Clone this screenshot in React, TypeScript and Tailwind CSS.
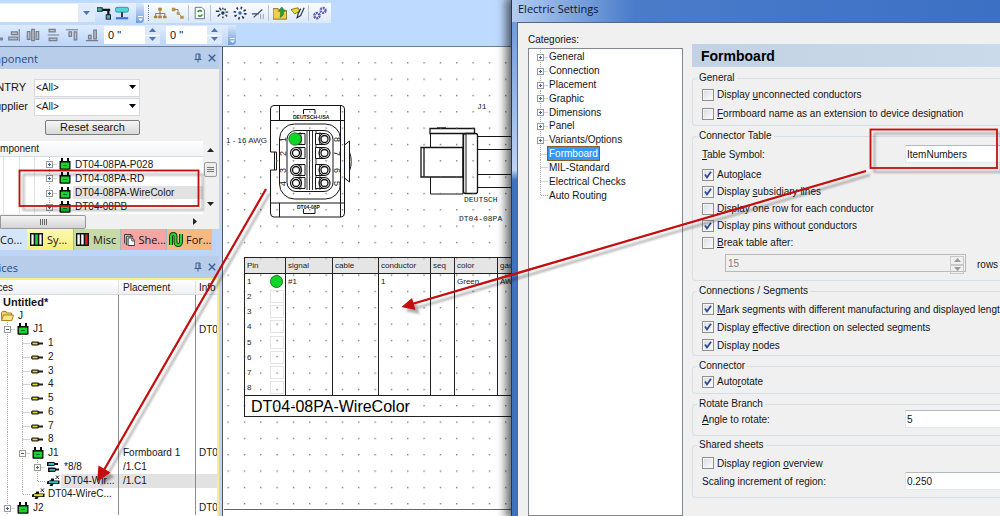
import type { ReactNode } from "react";

const INK = "#151515";

/* ---------- small drawings ---------- */

function Seg({ kind, box }: { kind: "pass" | "tee" | "end" | "none"; box?: "plus" | "minus" }) {
  return (
    <svg width="15" height="14" viewBox="0 0 15 14" className="block shrink-0" aria-hidden="true">
      {kind !== "none" && (
        <path
          d={kind === "end" ? "M7.5 0V7.5H15" : kind === "tee" ? "M7.5 0V14M7.5 7.5H15" : "M7.5 0V14"}
          stroke="#a9a9a9"
          strokeDasharray="1 1"
          fill="none"
        />
      )}
      {box && (
        <>
          <rect x="4.5" y="4.5" width="6" height="6" fill="#fdfdfd" stroke="#9a9a9a" />
          <path d={box === "plus" ? "M6 7.5H9M7.5 6V9" : "M6 7.5H9"} stroke="#3b5ea8" />
        </>
      )}
    </svg>
  );
}

function Plug() {
  return (
    <svg width="12" height="12" viewBox="0 0 12 12" className="block shrink-0" aria-hidden="true">
      <path d="M2 0H4V3H8V0H10V3H11.5V11Q11.5 11.8 10.5 11.8H1.5Q.5 11.8 .5 11V3H2Z" fill="#0a0a0a" />
      <rect x="1.8" y="4.600" width="8.4" height="5.800" rx="1" fill="#16d52c" />
      <path d="M4 7.5H8" stroke="#063" />
    </svg>
  );
}

function Pin() {
  return (
    <svg width="12" height="12" viewBox="0 0 12 12" className="block shrink-0" aria-hidden="true">
      <path d="M1 4.5H7L8.5 5.5H12V7.5H8.5L7 8.5H1L0 7V6Z" fill="#222" />
      <path d="M1.5 6.5H6.5" stroke="#e6dc1e" strokeWidth="1.6" />
    </svg>
  );
}

function Wires() {
  return (
    <svg width="13" height="12" viewBox="0 0 13 12" className="block shrink-0" aria-hidden="true">
      <path d="M0 1H7L8 2H11V4H8L7 5H0Z M1 6.500H8L9 7.500H12V9.500H9L8 11H1Z" fill="#111" />
      <path d="M1.500 3H7M2.500 8.800H8" stroke="#22c4cc" strokeWidth="1.800" />
    </svg>
  );
}

function Tagged({ tone }: { tone: string }) {
  return (
    <svg width="13" height="12" viewBox="0 0 13 12" className="block shrink-0" aria-hidden="true">
      <path d="M0 6.5L4 5V3.5H7V5.5H12.5V9H6.5L5.5 11H2.5L3.5 9H0Z" fill="#111" />
      <path d="M2 7.200H11" stroke={tone} strokeWidth="2" />
      <path d="M8.5 4L12 .5M9 .5L12 4" stroke="#222" />
    </svg>
  );
}

function Folder() {
  return (
    <svg width="13" height="12" viewBox="0 0 13 12" className="block shrink-0" aria-hidden="true">
      <path d="M.5 10V2.5L1.5 1.5H5L6 3H10.5V5" fill="#f1cf5b" stroke="#a98520" />
      <path d="M.5 10.5L2.5 5H12.5L10.8 10.5Z" fill="#fce58e" stroke="#a98520" />
    </svg>
  );
}

function PushPin() {
  return (
    <svg width="8" height="10" viewBox="0 0 8 10" aria-hidden="true">
      <path d="M2 6V1H6V6M5 1V6M.5 6.5H7.5M4 6.5V9.5" stroke="#3c5f93" fill="none" />
    </svg>
  );
}

function Cross() {
  return (
    <svg width="8" height="8" viewBox="0 0 8 8" aria-hidden="true">
      <path d="M.8 .8L7.2 7.2M7.2 .8L.8 7.2" stroke="#3c5f93" strokeWidth="1.4" />
    </svg>
  );
}

function Tri({ d, fill = "#222" }: { d: "up" | "down" | "right"; fill?: string }) {
  const p = { up: "M0 5L3.5 1L7 5Z", down: "M0 1L3.5 5L7 1Z", right: "M1 0L5 3.5L1 7Z" }[d];
  return (
    <svg width="7" height="7" viewBox="0 0 7 7" className="block shrink-0" aria-hidden="true">
      <path d={p} fill={fill} />
    </svg>
  );
}

/* ---------- toolbars ---------- */

function Tool({ label, children }: { label: string; children: ReactNode }) {
  return (
    <button type="button" aria-label={label} className="flex h-[18px] w-[18px] shrink-0 items-center justify-center">
      <svg width="14" height="14" viewBox="0 0 16 16" fill="none" aria-hidden="true">
        {children}
      </svg>
    </button>
  );
}

const Sep = () => <span className="mx-px h-4 w-[2px] shrink-0 border-l border-[#b8c4d4]" />;

function Overflow() {
  return (
    <button type="button" aria-label="Toolbar options" className="flex h-full w-2 shrink-0 items-end justify-center rounded-r bg-linear-to-b from-[#dcebfd] to-[#6f9bd6] pb-px">
      <svg width="7" height="7" viewBox="0 0 7 7" aria-hidden="true">
        <path d="M1 1.5H6" stroke="#fff" />
        <path d="M1 3.5H6L3.5 6Z" fill="#fff" />
      </svg>
    </button>
  );
}

function AngleBox({ label }: { label: string }) {
  return (
    <div className="flex h-[18px] w-14 shrink-0 bg-white">
      <input aria-label={label} defaultValue={'0 "'} className="w-0 flex-1 bg-transparent pl-1 text-[11px] text-[#151515] outline-none" />
      <div className="flex w-[15px] flex-col gap-px">
        <button type="button" aria-label={label + " up"} className="flex flex-1 items-center justify-center bg-[#dde9f8]"><Tri d="up" fill="#4b77b8" /></button>
        <button type="button" aria-label={label + " down"} className="flex flex-1 items-center justify-center bg-[#dde9f8]"><Tri d="down" fill="#4b77b8" /></button>
      </div>
    </div>
  );
}

function Toolbars() {
  return (
    <header className="flex h-[47px] shrink-0 flex-col gap-[2px] overflow-hidden border-b border-[#6f7f96] bg-[#bfdaff] pt-[3px]">
      <div className="flex h-5 shrink-0">
        <div className="flex h-full w-36 shrink-0 items-center bg-linear-to-b from-[#e9f2fe] to-[#c3dafa]">
          <div className="flex h-[18px] w-[95px] items-center bg-white">
            <input aria-label="Name" className="h-full w-0 flex-1 outline-none" />
            <button type="button" aria-label="Open list" className="flex h-full w-[17px] items-center justify-center bg-[#dfebfb]">
              <Tri d="down" fill="#4b77b8" />
            </button>
          </div>
          <Tool label="Connection">
            <rect x="0" y="2" width="6" height="4" fill="#39b9b2" stroke="#111" />
            <rect x="10.500" y="10" width="5" height="5" fill="#39b9b2" stroke="#111" />
            <path d="M6 4.500H15M13 4V10" stroke="#111" strokeWidth="2.500" />
          </Tool>
          <Tool label="Route">
            <rect x=".5" y="1.500" width="15" height="5.500" rx="2" fill="#53d3dc" stroke="#2b8f98" />
            <path d="M8 7V13" stroke="#222" strokeWidth="2" />
            <path d="M1 14H15" stroke="#3f6fe0" strokeWidth="2.500" />
          </Tool>
          <span className="flex-1" />
          <Overflow />
        </div>
        <div className="flex h-full w-[187px] shrink-0 items-center bg-linear-to-b from-[#fbfdff] to-[#dbe8f9] pl-1">
          <span className="mr-[2px] h-4 w-px border-l border-dotted border-[#5d83bb]" />
          <Tool label="Hierarchy">
            <path d="M8 4V8M3 12V8.500H13.500V12M8 8V12" stroke="#7a6a3a" />
            <path d="M6 2H10V5.500H6ZM1 11H5V14H1ZM6 11H10V14H6ZM11.500 11H15.500V14H11.500Z" fill="#a98235" />
          </Tool>
          <Tool label="Chain">
            <path d="M4 4H8V8L12 12" stroke="#777" />
            <path d="M1 2H5V6H1ZM6.500 7H10V10H6.500ZM10.500 11H14.500V14.500H10.500Z" fill="#b99142" />
          </Tool>
          <Sep />
          <Tool label="Refresh sheet">
            <path d="M2.500 1.500H10L13 4.500V14.500H2.500Z" fill="#fff" stroke="#52637d" />
            <path d="M5.500 7A2.500 2.500 0 0 1 10 6.500M10.500 9.500A2.500 2.500 0 0 1 6 10.500" stroke="#3f9a36" strokeWidth="2" />
          </Tool>
          <Sep />
          <Tool label="Converge">
            <path d="M1 6H5M5 2L7 5M3 12L6 9M9 2V4M12 3L11 5M15 7H12M14 12L12 10M9 12V14" stroke="#27364f" strokeWidth="1.600" />
            <circle cx="9" cy="8" r="2" fill="#27364f" />
          </Tool>
          <Tool label="Spread">
            <circle cx="8" cy="8" r="6" stroke="#27364f" strokeWidth="3" strokeDasharray="1.800 2.900" />
            <circle cx="8" cy="8" r="2" fill="#3867a8" />
          </Tool>
          <Tool label="Trim">
            <path d="M1 9H9M3 13L13 4" stroke="#3c4c66" strokeWidth="1.300" />
            <path d="M11 9V15M14 9V15" stroke="#8a97aa" />
          </Tool>
          <Sep />
          <Tool label="Open folder">
            <path d="M0 3H6L7.500 5H15.500V15H0Z" fill="#f0cf4c" stroke="#80681c" />
            <path d="M8 13C12 11.500 13 8.500 11.500 6H14L10 1L6 6H8.500C9 9 8.500 11 8 13" fill="#2e9b36" stroke="#1b6422" strokeWidth=".6" />
          </Tool>
          <Tool label="Mark">
            <path d="M0 4L8 2L10 6L4 9Z" fill="#eae023" stroke="#77710f" />
            <path d="M15 2L11 11L7 13.500L8 9L11 3" stroke="#27364f" strokeWidth="1.400" />
          </Tool>
          <Sep />
          <Tool label="Settings">
            <circle cx="4.500" cy="11" r="3" stroke="#5a57b5" strokeWidth="2.800" strokeDasharray="2.300 .8" />
            <circle cx="11.500" cy="5" r="2.800" stroke="#6a66c0" strokeWidth="2.800" strokeDasharray="2.300 .8" />
          </Tool>
        </div>
      </div>
      <div className="flex h-5 shrink-0 items-center">
        <div className="flex h-full w-[236px] items-center bg-linear-to-b from-[#dfecfe] to-[#bcd5f8]">
          <div className="flex w-[104px] shrink-0 items-center justify-between pr-[3px]">
            <svg width="3" height="16" viewBox="0 0 3 16" aria-hidden="true"><path d="M0 12H3" stroke="#7f8794" strokeWidth="3" /></svg>
            <Tool label="Align right"><path d="M14 1V15M5 4.500H12V7.500H5ZM2 10.500H12V13.500H2Z" fill="#b9bec7" stroke="#777e8a" strokeWidth="1.300" /></Tool>
            <Tool label="Distribute across"><path d="M1.500 4H4.500V13H1.500ZM6.500 1.500H9.500V14.500H6.500ZM11.500 4H14.500V13H11.500Z" fill="#b9bec7" stroke="#777e8a" strokeWidth="1.300" /></Tool>
            <Tool label="Distribute down"><path d="M3.500 1.500H10.500V4.500H3.500ZM2 8H15M3.500 11.500H12.500V14.500H3.500Z" fill="#b9bec7" stroke="#777e8a" strokeWidth="1.300" /></Tool>
            <Tool label="Align top"><path d="M1 2H15M4.500 4.500H7.500V9.500H4.500ZM10.500 4.500H13.500V13.500H10.500Z" fill="#b9bec7" stroke="#777e8a" strokeWidth="1.300" /></Tool>
            <Tool label="Align bottom"><path d="M1 14.500H15M4 8.500H7V12.500H4ZM10 2.500H13V12.500H10Z" fill="#b9bec7" stroke="#777e8a" strokeWidth="1.300" /></Tool>
          </div>
          <AngleBox label="Angle A" />
          <span className="w-[6px]" />
          <AngleBox label="Angle B" />
          <span className="flex-1" />
          <Overflow />
        </div>
      </div>
    </header>
  );
}

/* ---------- left docked panels ---------- */

function PanelHead({ title, edge }: { title: string; edge: string }) {
  return (
    <div className="flex h-[22px] shrink-0 items-center bg-[#b7cde9] pr-[3px] font-['Open_Sans',sans-serif] text-[11px] text-[#1f4a8c]">
      <h2 className={"flex shrink-0 justify-end " + edge}>{title}</h2>
      <span className="flex-1" />
      <button type="button" aria-label={"Pin " + title} className="mr-[6px]"><PushPin /></button>
      <button type="button" aria-label={"Close " + title}><Cross /></button>
    </div>
  );
}

function Filter({ label, id, edge }: { label: string; id: string; edge: string }) {
  return (
    <div className="flex h-[19px] items-center">
      <div className="flex w-[34px] shrink-0">
        <label htmlFor={id} className={"flex justify-end text-[11px] " + edge}>{label}</label>
      </div>
      <div className="grid w-[106px] items-center">
        <select id={id} className="col-start-1 row-start-1 h-[18px] appearance-none border border-[#d5d9df] bg-white pl-px text-[10px] leading-none">
          <option>&lt;All&gt;</option>
        </select>
        <span className="pointer-events-none col-start-1 row-start-1 mr-1 justify-self-end"><Tri d="down" fill="#000" /></span>
      </div>
    </div>
  );
}

const PARTS = ["DT04-08PA-P028", "DT04-08PA-RD", "DT04-08PA-WireColor", "DT04-08PB"];

function ComponentPanel() {
  return (
    <section className="flex h-[203px] shrink-0 flex-col overflow-hidden bg-[#f0f0f0]">
      <PanelHead title="Component" edge="w-[38px]" />
      <div className="flex h-[72px] shrink-0 flex-col pt-[9px]">
        <Filter label="COUNTRY" id="country" edge="w-[26px]" />
        <Filter label="Supplier" id="supplier" edge="w-[28px]" />
        <button type="button" className="mt-[4px] ml-[45px] h-[15px] w-[95px] rounded-xs border border-[#7c7c7c] bg-linear-to-b from-[#f6f6f6] to-[#d9d9d9] text-[11px] leading-[13px]">Reset search</button>
      </div>
      <div className="flex h-[73px] shrink-0">
        <div className="flex w-[203px] shrink-0 flex-col bg-white">
          <div className="flex h-4 shrink-0 items-center border-b border-[#d8dce2] bg-linear-to-b from-white to-[#f1f2f4]">
            <span className="flex w-[39px] justify-end">Component</span>
          </div>
          <ul className="flex min-h-0 flex-1 flex-col">
            {PARTS.map((p) => (
              <li key={p} className="flex min-h-0 flex-1 items-center leading-[13px]">
                <span className="ml-[3px] h-full w-[16px] border-l border-[#e2e2e2]" />
                <span className="h-full w-[15px] border-l border-[#e2e2e2]" />
                <span className="h-full w-[8px] border-l border-[#e2e2e2]" />
                <Seg kind="tee" box="plus" />
                <span className="mx-[2px]"><Plug /></span>
                <span className={p === "DT04-08PA-WireColor" ? "flex-1 bg-[#e2e2e2] pl-[2px]" : "flex-1 pl-[2px]"}>{p}</span>
              </li>
            ))}
          </ul>
        </div>
        <div className="flex w-[14px] flex-col items-center bg-[#f0f0f0] py-[6px]">
          <Tri d="up" />
          <div className="mt-[8px] flex h-[15px] w-[13px] flex-col items-center justify-center gap-px rounded-xs border border-[#989898] bg-[#ececec]">
            <span className="h-px w-[7px] bg-[#777]" />
            <span className="h-px w-[7px] bg-[#777]" />
            <span className="h-px w-[7px] bg-[#777]" />
          </div>
          <span className="flex-1" />
          <Tri d="down" />
        </div>
      </div>
      <div className="flex h-[15px] shrink-0 items-center bg-[#f0f0f0]">
        <div className="flex h-[14px] w-[86px] items-center justify-center gap-px rounded-r-xs border border-[#989898] bg-linear-to-b from-[#f4f4f4] to-[#d4d4d4]">
          <span className="h-[6px] w-px bg-[#666]" />
          <span className="h-[6px] w-px bg-[#666]" />
          <span className="h-[6px] w-px bg-[#666]" />
          <span className="h-[6px] w-px bg-[#666]" />
        </div>
        <span className="ml-[106px]"><Tri d="right" /></span>
      </div>
      <nav className="flex flex-1 bg-[#bcd5f6] font-['Open_Sans',sans-serif] text-[11px]">
        <button type="button" className="w-[27px] bg-[#d5e6fb] text-left">Co...</button>
        <button type="button" className="flex w-[46px] items-center gap-[4px] bg-linear-to-b from-[#fdf9b0] to-[#f8ee78] pl-[3px]">
          <svg width="13" height="13" viewBox="0 0 13 13" aria-hidden="true"><path d="M.7 .7H4.500V12.300H.7ZM8.500 .7H12.300V12.300H8.500Z" fill="#fff" stroke="#111" strokeWidth="1.400" /><rect x="4.500" y=".7" width="4" height="11.600" fill="#1bd431" stroke="#111" strokeWidth="1.400" /></svg>
          Sy...
        </button>
        <button type="button" className="flex w-[47px] items-center gap-[4px] border-l border-[#a5b6c4] bg-[#c6d9a6] pl-[2px]">
          <svg width="13" height="13" viewBox="0 0 13 13" aria-hidden="true"><path d="M.7 .7H4.500V12.300H.7ZM4.500 .7H8.500V12.300H4.500Z" fill="#fff" stroke="#111" strokeWidth="1.400" /><rect x="8.500" y=".7" width="3.800" height="11.600" fill="#e02020" stroke="#111" strokeWidth="1.400" /></svg>
          Misc
        </button>
        <button type="button" className="flex w-[46px] items-center gap-[3px] border-l border-[#a5b6c4] bg-[#f4a5a4] pl-[3px]">
          <svg width="13" height="14" viewBox="0 0 13 14" aria-hidden="true"><path d="M.7 11V.7H8V3M2.700 13V2.700H10V4" fill="#ddd" stroke="#222" /><path d="M4.700 13.300V4.700H9.500L12.300 7.500V13.300Z" fill="#fff" stroke="#222" /><path d="M9 5V8H12" stroke="#222" fill="none" /></svg>
          She...
        </button>
        <button type="button" className="flex w-[46px] items-center gap-px border-l border-[#a5b6c4] bg-[#f8b980] pl-[2px]">
          <svg width="16" height="15" viewBox="0 0 16 15" aria-hidden="true"><path d="M2 13V5C2 1 6.500 1 6.500 5V10C6.500 14 12 14 12 10V2" fill="none" stroke="#173a10" strokeWidth="4" /><path d="M2 13V5C2 1 6.500 1 6.500 5V10C6.500 14 12 14 12 10V2" fill="none" stroke="#2bd23a" strokeWidth="2" /></svg>
          For...
        </button>
      </nav>
    </section>
  );
}

type Row = { name: string; lead: ReactNode; place?: string; info?: string; on?: boolean; bold?: boolean };

const pass = <Seg kind="pass" />;
const pinLead = (<>{pass}<Seg kind="tee" /><span className="mr-[5px] ml-px"><Pin /></span></>);

const ROWS: Row[] = [
  { name: "Untitled*", lead: <span className="w-[3px]" />, bold: true },
  { name: "J", lead: <span className="mr-[4px] ml-px"><Folder /></span> },
  { name: "J1", lead: <><Seg kind="tee" box="minus" /><span className="mr-[4px] ml-[2px]"><Plug /></span></>, info: "DT0" },
  ...["1", "2", "3", "4", "5", "6", "7", "8"].map((name) => ({ name, lead: pinLead })),
  { name: "J1", lead: <>{pass}<Seg kind="tee" box="minus" /><span className="mr-[4px] ml-[2px]"><Plug /></span></>, place: "Formboard 1", info: "DT0" },
  { name: "*8/8", lead: <>{pass}{pass}<Seg kind="tee" box="plus" /><span className="mr-[4px] ml-[2px]"><Wires /></span></>, place: "/1.C1" },
  { name: "DT04-Wir...", lead: <>{pass}{pass}<Seg kind="end" /><span className="mr-px ml-[2px]"><Tagged tone="#22c4cc" /></span></>, place: "/1.C1", on: true },
  { name: "DT04-WireC...", lead: <>{pass}<Seg kind="end" /><span className="mr-[3px] ml-[2px]"><Tagged tone="#e6dc1e" /></span></> },
  { name: "J2", lead: <><Seg kind="tee" box="plus" /><span className="mr-[4px] ml-[2px]"><Plug /></span></>, info: "DT0" },
];

function DevicesPanel() {
  return (
    <section className="flex flex-1 flex-col overflow-hidden">
      <PanelHead title="Devices" edge="w-[18px]" />
      <div className="flex-1 border-t-2 border-r-2 border-[#f4ef8c] bg-white">
        <div className="flex h-[15px] items-center border-b border-[#d8dce2] bg-linear-to-b from-white to-[#eff0f2]">
          <span className="flex w-[118px] shrink-0"><span className="flex w-[13px] justify-end">Devices</span></span>
          <span className="w-[77px] shrink-0 border-l border-[#dcdfe4] pl-[4px]">Placement</span>
          <span className="w-[22px] shrink-0 border-l border-[#dcdfe4] pl-[3px]">Info</span>
        </div>
        <ul className="flex h-[220px] flex-col">
          {ROWS.map((r, i) => (
            <li key={i} className="flex min-h-0 flex-1 items-stretch leading-[14px] whitespace-nowrap">
              <span className="flex w-[118px] shrink-0 items-center">
                {r.lead}
                <span className={(r.on ? "flex-1 bg-[#e2e2e2] pl-[3px] " : "") + (r.bold ? "text-[11px] font-bold" : "")}>{r.name}</span>
              </span>
              <span className={"w-[77px] shrink-0 border-l border-[#8c8c8c] pl-[4px] " + (r.on ? "bg-[#e2e2e2]" : "")}>{r.place}</span>
              <span className={"w-[22px] shrink-0 overflow-hidden border-l border-[#8c8c8c] pl-[3px] " + (r.on ? "bg-[#e2e2e2]" : "")}>{r.info}</span>
            </li>
          ))}
        </ul>
      </div>
    </section>
  );
}

/* ---------- drawing area ---------- */

function Cavity({ x, y, flip }: { x: number; y: number; flip?: boolean }) {
  const s = flip ? -1 : 1;
  return (
    <g stroke={INK} fill="none">
      <path d={`M${x + s * 9} ${y - 5.500}H${x}A5.500 5.500 0 0 0 ${x} ${y + 5.500}H${x + s * 9}Z`} fill="#fff" stroke="none" />
      <circle cx={x} cy={y} r="5.500" strokeWidth="1.200" />
      <circle cx={x} cy={y} r="3.500" strokeWidth="1.300" />
      <path d={`M${x} ${y - 5.500}H${x + s * 9}V${y + 5.500}H${x}`} />
      <path d={`M${x + s * 5} ${y - 5.500}V${y + 5.500}`} strokeWidth=".7" />
    </g>
  );
}

function Drawing() {
  const ys = [139, 153, 170, 183];
  return (
    <svg width="288" height="469" viewBox="223 47 288 469" className="block" role="img" aria-label="Connector views">
      <defs>
        <pattern id="dots" x="227.500" y="62.200" width="16.330" height="16.330" patternUnits="userSpaceOnUse">
          <rect width="1.300" height="1.300" fill="#6a6a6a" />
        </pattern>
      </defs>
      <g stroke={INK} fill="none">
        <path d="M274 105.500H341Q344.500 105.500 344.500 109V213Q344.500 217 341 217H274Q270.500 217 270.500 213V170H276.500V152H270.500V109Q270.500 105.500 274 105.500Z" />
        <path d="M270.500 120.500H345M270.500 203H345M279.500 105V120.500M340.500 105V217M279.500 203V217M274.500 152V170" />
        <path d="M344.500 145L349.500 141V182L344.500 178M349.500 152Q353 161.500 349.500 171" />
        <rect x="279.500" y="124" width="61" height="75" rx="15" />
        <rect x="287" y="130.500" width="46" height="61" rx="9" />
        <path d="M307 131V190M309.500 131V190M312.500 131V190M316 131V190" strokeWidth=".9" />
        <path d="M303.500 114V109.500H315V114M303.500 209V213.500H315V209" />
        <path d="M300 132V145M320 132V145M300 176V190M320 176V190" strokeWidth=".7" />
      </g>
      {ys.map((y) => (
        <g key={y}>
          <Cavity x={296} y={y} />
          <Cavity x={324.500} y={y} flip />
        </g>
      ))}
      <circle cx="295" cy="139" r="6.200" fill="#12d52a" stroke="#0c7a18" strokeWidth=".8" />
      <g fill={INK} fontFamily="Liberation Sans, sans-serif" fontSize="5" fontWeight="bold">
        <text x="293" y="119">DEUTSCH-USA</text>
        <text x="297" y="209">DT04-08P</text>
      </g>
      <g fill={INK} fontFamily="Liberation Sans, sans-serif" fontSize="9">
        {["1", "2", "3", "4"].map((t, i) => (
          <text key={t} transform={`translate(286 ${ys[i] + 3}) rotate(-90)`}>{t}</text>
        ))}
        {["8", "7", "6", "5"].map((t, i) => (
          <text key={t} transform={`translate(334 ${ys[i] - 2}) rotate(90)`}>{t}</text>
        ))}
      </g>
      <text x="226" y="143" fontFamily="Liberation Sans, sans-serif" fontSize="8" fill="#26262e">1 - 16 AWG</text>
      <g stroke={INK} fill="none">
        <path d="M430 128.500H474.500V133.500H430ZM437 128H446" strokeWidth="1.300" />
        <path d="M430.500 134V147M430.500 177V194H463V134" />
        <path d="M421 147.500H463V177H421ZM424 148V177" strokeWidth="1.300" />
        <rect x="463.500" y="133.500" width="14" height="60" rx="2" strokeWidth="1.300" />
        <path d="M466 134V193M478 136.500H511M478 149.500H511M478 174.500H511M478 187.500H511" />
      </g>
      <g fill="#1a1a1a" fontFamily="Liberation Mono, monospace" fontSize="8">
        <text x="477" y="109">J1</text>
        <text x="464" y="202">DEUTSCH</text>
        <text x="459" y="221">DT04-08PA</text>
      </g>
      <rect x="224" y="48" width="287" height="468" fill="url(#dots)" />
      <path d="M224 509.500H511" stroke="#666" />
    </svg>
  );
}

const COLS: [string, string][] = [
  ["Pin", "w-[41px]"],
  ["signal", "w-[47px]"],
  ["cable", "w-[46px]"],
  ["conductor", "w-[52px]"],
  ["seq", "w-[24px]"],
  ["color", "w-[43px]"],
  ["gau", "w-[40px]"],
];
const FIRST = ["", "#1", "", "1", "", "Green", "AW"];

function PinTable() {
  return (
    <div className="absolute top-[210px] left-[21px] w-[293px] text-[#222]">
      <table className="h-[139px] w-full table-fixed border-collapse border border-[#222] text-left text-[8px] leading-[9px]">
        <thead>
          <tr className="h-4 border-b border-[#222] bg-[#d4d4d4]/60">
            {COLS.map(([t, w]) => (
              <th key={t} className={w + " border-l border-[#222] p-0 pl-[2px] font-normal"}>{t}</th>
            ))}
          </tr>
        </thead>
        <tbody>
          {["1", "2", "3", "4", "5", "6", "7", "8"].map((n, i) => (
            <tr key={n}>
              <td className="border-l border-[#222] p-0">
                <div className="flex items-center justify-between pl-[2px]">
                  {n}
                  {i === 0 ? (
                    <span className="mr-[2px] h-[13px] w-[13px] rounded-full border border-[#0c7a18] bg-[#12d52a]" />
                  ) : (
                    <span className="mr-px h-[13px] w-[14px] border border-[#e4e4e4]" />
                  )}
                </div>
              </td>
              {COLS.slice(1).map(([t], c) => (
                <td key={t} className="border-l border-[#222] p-0 pl-[2px]">{i === 0 ? FIRST[c + 1] : ""}</td>
              ))}
            </tr>
          ))}
        </tbody>
      </table>
      <p className="h-[21px] border border-t-0 border-[#222] pl-[6px] text-[16px] leading-[22px] text-black">DT04-08PA-WireColor</p>
    </div>
  );
}

/* ---------- dialog ---------- */

function Check({ id, on, size, children }: { id: string; on?: boolean; size: string; children: ReactNode }) {
  return (
    <div className={"flex shrink-0 items-center whitespace-nowrap " + size}>
      <span className="mr-[3px] grid shrink-0">
        <input id={id} type="checkbox" defaultChecked={on} className="peer col-start-1 row-start-1 h-3 w-3 appearance-none border border-[#8e8f8f] bg-linear-to-br from-[#d6dae0] to-white shadow-[inset_0_0_0_1px_#f4f4f4]" />
        <svg viewBox="0 0 12 12" className="pointer-events-none invisible col-start-1 row-start-1 h-3 w-3 peer-checked:visible" aria-hidden="true">
          <path d="M3 5.500L5 8.500L9 2.800" fill="none" stroke="#2d4a9a" strokeWidth="1.800" />
        </svg>
      </span>
      <label htmlFor={id}>{children}</label>
    </div>
  );
}

function Group({ title, className, children }: { title: string; className: string; children: ReactNode }) {
  return (
    <fieldset className={"min-w-0 shrink-0 rounded-l-sm border border-r-0 border-[#d5dfe5] pl-[9px] " + className}>
      <legend className="-ml-[5px] h-3 px-[2px] leading-3">{title}</legend>
      {children}
    </fieldset>
  );
}

function Field({ id, label, value }: { id: string; label: ReactNode; value: string }) {
  return (
    <div className="flex h-[18px] shrink-0 items-center">
      <label htmlFor={id} className="w-[203px] shrink-0 whitespace-nowrap">{label}</label>
      <input id={id} defaultValue={value} className="h-[18px] w-0 flex-1 border border-r-0 border-[#e1e5ec] border-t-[#b4b8c0] bg-white pl-px outline-none" />
    </div>
  );
}

const CATS = ["General", "Connection", "Placement", "Graphic", "Dimensions", "Panel", "Variants/Options", "Formboard", "MIL-Standard", "Electrical Checks", "Auto Routing"];

function SettingsDialog() {
  return (
    <section role="dialog" aria-label="Electric Settings" className="relative flex min-w-0 flex-1 flex-col border-l border-[#26364f] bg-linear-to-r from-[#8fb4e6] to-[#4376c8] shadow-[-2px_0_9px_3px_rgba(0,0,0,0.6)]">
      <div className="flex h-[22px] shrink-0 items-center bg-linear-to-r from-[#b4cdf0] via-[#4a7cca] via-25% to-[#3c70c4] pb-[5px] pl-[6px]">
        <h1 className="font-['Open_Sans',sans-serif] text-[11px] text-[#10151f]">Electric Settings</h1>
      </div>
      <div className="flex min-h-0 flex-1">
        <div className="w-[5px] shrink-0 bg-linear-to-b from-[#6f9bdc] via-[#bcd3f3] via-30% to-[#3f72c2] to-32%" />
        <div className="flex min-w-0 flex-1 border-t border-l border-[#58677f] bg-[#f0f0f0] pl-[10px]">
          <div className="flex w-[155px] shrink-0 flex-col pt-[11px]">
            <span className="h-[14px] leading-3">Categories:</span>
            <div className="flex-1 border border-[#828790] bg-white pt-px">
              <ul className="flex h-[152px] flex-col">
                {CATS.map((c, i) => (
                  <li key={c} className="flex min-h-0 flex-1 items-center pl-[4px] leading-[13px]">
                    <Seg kind={i === CATS.length - 1 ? "end" : "tee"} box={i < 7 ? "plus" : undefined} />
                    <a href="#" className={c === "Formboard" ? "bg-[#3399ff] px-px text-white outline outline-1 outline-[#8a5a20]" : "px-px"}>{c}</a>
                  </li>
                ))}
              </ul>
            </div>
          </div>
          <div className="ml-[9px] flex min-w-0 flex-1 flex-col overflow-hidden pt-[21px]">
            <h2 className="h-[23px] shrink-0 bg-linear-to-r from-[#c2d2e4] to-[#cbdaea] pl-[9px] text-[14px] leading-[24px] font-bold text-black">Formboard</h2>
            <Group title="General" className="mt-[5px] h-[54px] pt-px">
              <Check id="c1" size="h-[19px]">Display <u>u</u>nconnected conductors</Check>
              <Check id="c2" size="h-[19px]"><u>F</u>ormboard name as an extension to device designation</Check>
            </Group>
            <Group title="Connector Table" className="mt-1 h-[151px] pt-[3px]">
              <Field id="symbol" label={<><u>T</u>able Symbol:</>} value="ItemNumbers" />
              <div className="mt-[3px]">
                <Check id="c3" size="h-[17px]" on>Auto<u>p</u>lace</Check>
                <Check id="c4" size="h-[17px]" on>Display <u>s</u>ubsidiary lines</Check>
                <Check id="c5" size="h-[17px]"><u>D</u>isplay one row for each conductor</Check>
                <Check id="c6" size="h-[17px]" on>Display pins without <u>c</u>onductors</Check>
                <Check id="c7" size="h-[17px]"><u>B</u>reak table after:</Check>
              </div>
              <div className="mt-[3px] ml-[23px] flex">
                <div className="flex h-[18px] w-[241px] shrink-0 border border-[#b9b9b9] bg-[#f0f0f0] p-px">
                  <input aria-label="Break after" disabled defaultValue="15" className="w-0 flex-1 pl-px text-[#808080]" />
                  <div className="flex w-[14px] flex-col">
                    <button type="button" disabled aria-label="More rows" className="flex flex-1 items-center justify-center border border-[#c9c9c9]"><Tri d="up" fill="#999" /></button>
                    <button type="button" disabled aria-label="Fewer rows" className="flex flex-1 items-center justify-center border border-[#c9c9c9]"><Tri d="down" fill="#999" /></button>
                  </div>
                </div>
                <span className="ml-[11px] pt-[4px]">rows</span>
              </div>
            </Group>
            <Group title="Connections / Segments" className="mt-1 h-[71px] pt-[3px]">
              <Check id="c8" size="h-[18px]" on><u>M</u>ark segments with different manufacturing and displayed lengths</Check>
              <Check id="c9" size="h-[18px]" on>Display <u>e</u>ffective direction on selected segments</Check>
              <Check id="c10" size="h-[18px]" on>Display <u>n</u>odes</Check>
            </Group>
            <Group title="Connector" className="mt-1 h-[34px]">
              <Check id="c11" size="h-[19px]" on>Auto<u>r</u>otate</Check>
            </Group>
            <Group title="Rotate Branch" className="mt-1 h-[38px]">
              <Field id="angle" label={<><u>A</u>ngle to rotate:</>} value="5" />
            </Group>
            <Group title="Shared sheets" className="mt-[3px] h-[59px] pt-[3px]">
              <Check id="c12" size="h-[18px]">Display region <u>o</u>verview</Check>
              <Field id="scale" label="Scaling increment of region:" value="0.250" />
            </Group>
          </div>
        </div>
      </div>
    </section>
  );
}

/* ---------- callouts ---------- */

function Callouts() {
  return (
    <svg width="1000" height="516" viewBox="0 0 1000 516" className="pointer-events-none absolute top-0 left-0" aria-hidden="true">
      <defs>
        <filter id="cast" x="-10%" y="-10%" width="125%" height="125%">
          <feDropShadow dx="4" dy="4" stdDeviation="1.200" floodColor="#000" floodOpacity=".32" />
        </filter>
      </defs>
      <g filter="url(#cast)" fill="none" stroke="#c40808" strokeWidth="1.800">
        <rect x="19.500" y="170.500" width="179" height="35.500" />
        <rect x="870.500" y="129.500" width="126.500" height="38.500" />
        <path d="M266 189L104 470M866 171L412 304" strokeWidth="2.200" />
        <path d="M97 482L98.500 465.500L110.500 472.500ZM401.500 307L412 298L415.500 310Z" fill="#c40808" stroke="none" />
      </g>
    </svg>
  );
}

export default function App() {
  return (
    <main className="relative flex min-h-screen w-full overflow-hidden bg-[#bfdaff] font-['Liberation_Sans',sans-serif] text-[10px] leading-[13px] text-[#151515]">
      <div className="flex w-[511px] shrink-0 flex-col">
        <Toolbars />
        <div className="flex flex-1">
          <aside className="flex w-[223px] shrink-0 flex-col gap-[6px] border-r border-[#555] bg-[#bcd5f8] pr-[3px]">
            <ComponentPanel />
            <DevicesPanel />
          </aside>
          <div className="relative flex-1 overflow-hidden bg-white">
            <Drawing />
            <PinTable />
          </div>
        </div>
      </div>
      <SettingsDialog />
      <Callouts />
    </main>
  );
}
